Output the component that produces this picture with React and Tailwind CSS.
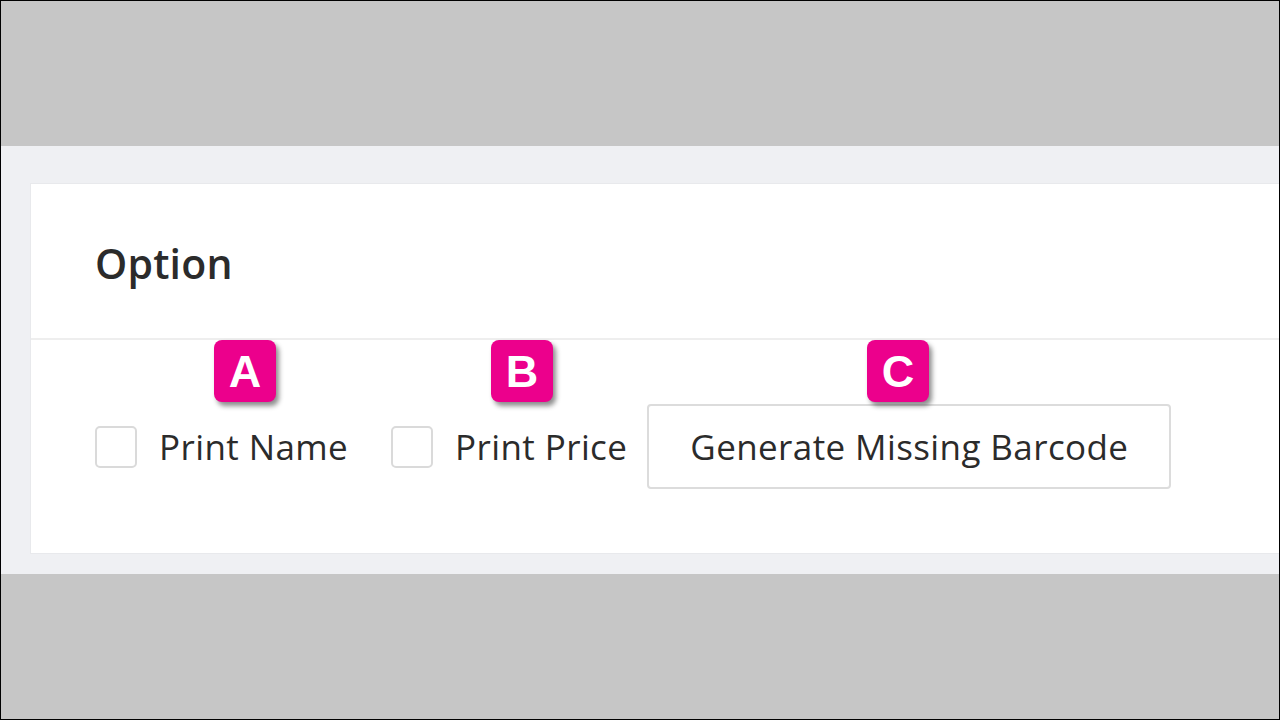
const font = { fontFamily: '"Open Sans", "Noto Sans", sans-serif' };

function Badge({ letter, className }) {
  return (
    <div
      className={
        "absolute w-[62px] h-[62px] rounded-[8px] bg-[#ec008c] flex items-center justify-center text-white text-[45px] font-bold leading-none shadow-[3px_4px_5px_rgba(0,0,0,0.45)] " +
        className
      }
      style={{ fontFamily: '"Liberation Sans", Arial, sans-serif' }}
    >
      {letter}
    </div>
  );
}

function Check({ label }) {
  return (
    <label className="flex items-center">
      <span className="w-[42px] h-[42px] rounded-[5px] border-2 border-[#dadada] bg-white" />
      <span className="ml-[22px] text-[35px] text-[#2b2b2b] leading-none tracking-[0.4px]">{label}</span>
    </label>
  );
}

export default function App() {
  return (
    <div className="w-[1280px] h-[720px] border border-black bg-[#c6c6c6] flex flex-col overflow-hidden" style={font}>
      <div className="h-[145px] shrink-0" />
      <div className="h-[428px] shrink-0 bg-[#eff0f3] pt-[37px] pl-[29px] pb-[20px]">
        <div className="h-full bg-white border border-r-0 border-[#e8e9ec] flex flex-col">
          <div className="h-[156px] shrink-0 flex items-center pl-[64px] pt-[4px] border-b-2 border-[#eeeeee]">
            <h2 className="text-[41px] font-semibold text-[#2b2b2b] leading-none tracking-[0.2px]">Option</h2>
          </div>
          <div className="flex-1 relative flex items-center pl-[64px]">
            <Check label="Print Name" />
            <div className="ml-[43px]">
              <Check label="Print Price" />
            </div>
            <button className="ml-[20px] w-[524px] h-[85px] border-2 border-[#dcdcdc] rounded-[4px] bg-white text-[35px] text-[#2b2b2b] leading-none tracking-[0.4px]">
              Generate Missing Barcode
            </button>
            <Badge letter="A" className="left-[183px] top-0" />
            <Badge letter="B" className="left-[460px] top-0" />
            <Badge letter="C" className="left-[836px] top-0" />
          </div>
        </div>
      </div>
    </div>
  );
}
